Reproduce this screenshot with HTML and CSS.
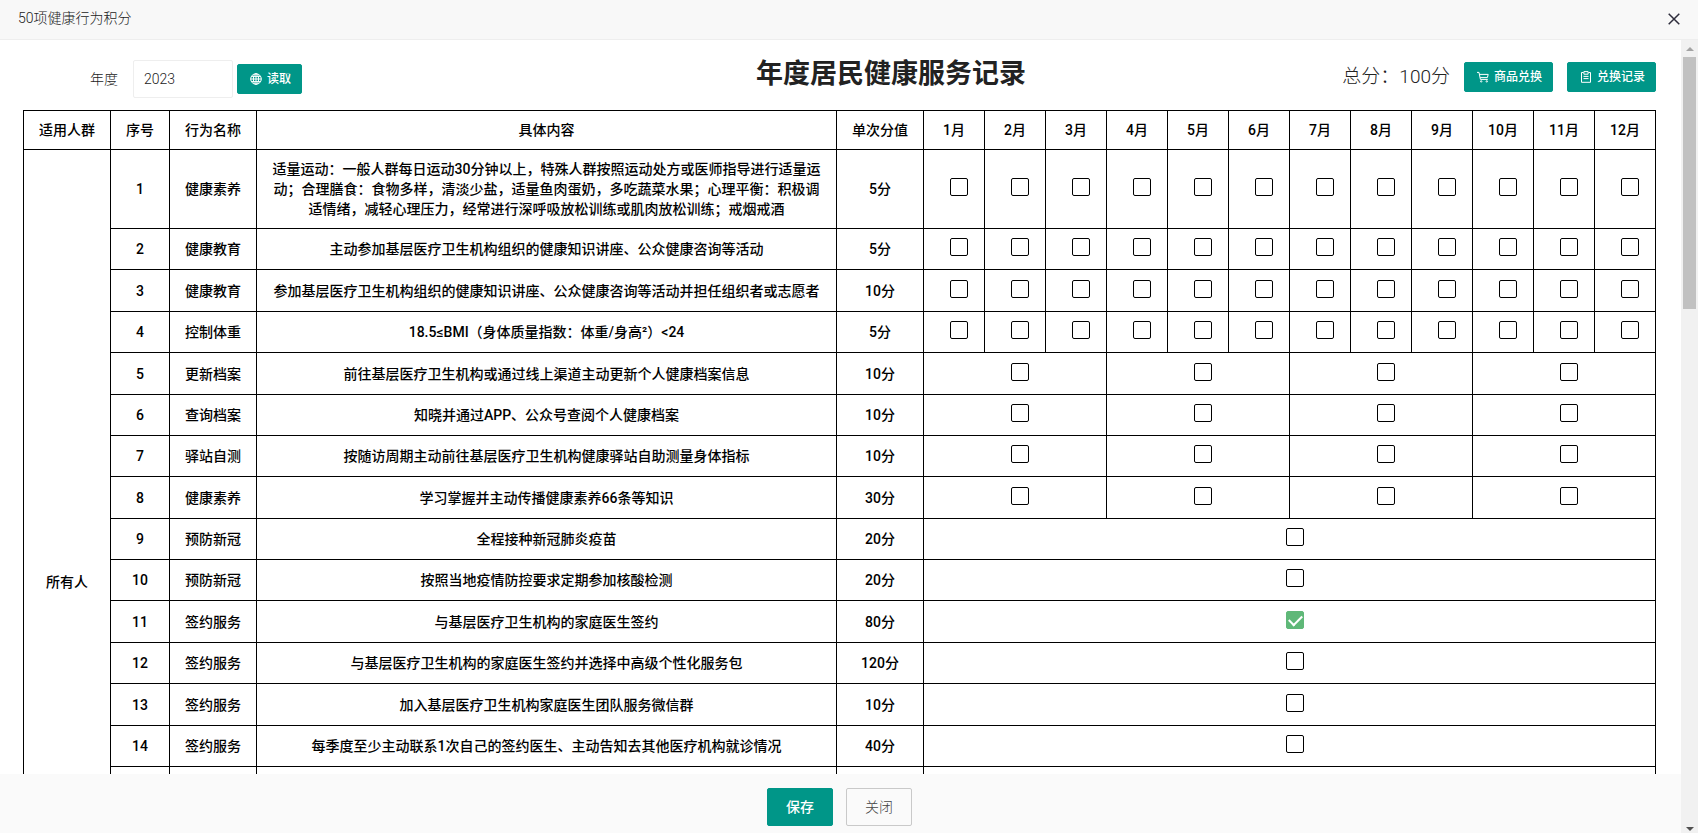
FILE: index.html
```html
<!DOCTYPE html>
<html lang="zh-CN">
<head>
<meta charset="utf-8">
<title>50项健康行为积分</title>
<link rel="stylesheet" href="styles.css">
</head>
<body>
<header class="dialog-head">
  <h1 class="dialog-title">50项健康行为积分</h1>
  <button class="dialog-close" type="button" aria-label="关闭窗口">
    <svg width="12" height="12" viewBox="0 0 12 12" fill="none" stroke="#2e2d3c" stroke-width="1.5"><path d="M.7.7l10.6 10.6M11.3.7L.7 11.3"/></svg>
  </button>
</header>
<div class="dialog-body">
  <div class="panel">
    <main class="content">
      <div class="toolbar">
        <form class="year-form">
          <label class="year-label" for="year">年度</label>
          <input class="year-input" id="year" type="text" value="2023">
          <button class="btn btn-small" type="button">
            <svg class="btn-icon" viewBox="0 0 12 12" fill="none" stroke="currentColor" stroke-width="1"><circle cx="6" cy="6" r="5.3"/><ellipse cx="6" cy="6" rx="2.6" ry="5.3"/><path d="M6 .7v10.6M.7 6h10.6M1.5 3.4h9M1.5 8.6h9"/></svg>
            读取
          </button>
        </form>
        <h2 class="record-title">年度居民健康服务记录</h2>
        <div class="score-bar">
          <span class="score">总分：100分</span>
          <button class="btn btn-small" type="button">
            <svg class="btn-icon" viewBox="0 0 12 12" fill="none" stroke="currentColor" stroke-width="1"><path d="M0 1.4h2l1.4 7h7.4M2.4 3.4h8.8l-.8 3.2H3.2"/><circle cx="4.2" cy="10.4" r=".7"/><circle cx="9.8" cy="10.4" r=".7"/></svg>
            商品兑换
          </button>
          <button class="btn btn-small" type="button">
            <svg class="btn-icon" viewBox="0 0 12 12" fill="none" stroke="currentColor" stroke-width="1"><path d="M3.5 1.5h-2v9.8h9V1.5h-2M3.9.6h4.2v2.6H3.9zM3.5 5.4h5M3.5 7.6h5"/></svg>
            兑换记录
          </button>
        </div>
      </div>
      <table class="records">
        <colgroup>
          <col class="col-label"><col class="col-index"><col class="col-label"><col><col class="col-label">
          <col class="col-month" span="12">
        </colgroup>
        <thead>
          <tr class="head-row"><th>适用人群</th><th>序号</th><th>行为名称</th><th>具体内容</th><th>单次分值</th><th>1月</th><th>2月</th><th>3月</th><th>4月</th><th>5月</th><th>6月</th><th>7月</th><th>8月</th><th>9月</th><th>10月</th><th>11月</th><th>12月</th></tr>
        </thead>
        <tbody>
          <tr class="long"><td rowspan="15">所有人</td><td>1</td><td>健康素养</td><td>适量运动：一般人群每日运动30分钟以上，特殊人群按照运动处方或医师指导进行适量运动；合理膳食：食物多样，清淡少盐，适量鱼肉蛋奶，多吃蔬菜水果；心理平衡：积极调适情绪，减轻心理压力，经常进行深呼吸放松训练或肌肉放松训练；戒烟戒酒</td><td>5分</td>
            <td><input type="checkbox" aria-label="1月"></td><td><input type="checkbox" aria-label="2月"></td><td><input type="checkbox" aria-label="3月"></td><td><input type="checkbox" aria-label="4月"></td><td><input type="checkbox" aria-label="5月"></td><td><input type="checkbox" aria-label="6月"></td><td><input type="checkbox" aria-label="7月"></td><td><input type="checkbox" aria-label="8月"></td><td><input type="checkbox" aria-label="9月"></td><td><input type="checkbox" aria-label="10月"></td><td><input type="checkbox" aria-label="11月"></td><td><input type="checkbox" aria-label="12月"></td></tr>
          <tr><td>2</td><td>健康教育</td><td>主动参加基层医疗卫生机构组织的健康知识讲座、公众健康咨询等活动</td><td>5分</td>
            <td><input type="checkbox" aria-label="1月"></td><td><input type="checkbox" aria-label="2月"></td><td><input type="checkbox" aria-label="3月"></td><td><input type="checkbox" aria-label="4月"></td><td><input type="checkbox" aria-label="5月"></td><td><input type="checkbox" aria-label="6月"></td><td><input type="checkbox" aria-label="7月"></td><td><input type="checkbox" aria-label="8月"></td><td><input type="checkbox" aria-label="9月"></td><td><input type="checkbox" aria-label="10月"></td><td><input type="checkbox" aria-label="11月"></td><td><input type="checkbox" aria-label="12月"></td></tr>
          <tr class="tall"><td>3</td><td>健康教育</td><td>参加基层医疗卫生机构组织的健康知识讲座、公众健康咨询等活动并担任组织者或志愿者</td><td>10分</td>
            <td><input type="checkbox" aria-label="1月"></td><td><input type="checkbox" aria-label="2月"></td><td><input type="checkbox" aria-label="3月"></td><td><input type="checkbox" aria-label="4月"></td><td><input type="checkbox" aria-label="5月"></td><td><input type="checkbox" aria-label="6月"></td><td><input type="checkbox" aria-label="7月"></td><td><input type="checkbox" aria-label="8月"></td><td><input type="checkbox" aria-label="9月"></td><td><input type="checkbox" aria-label="10月"></td><td><input type="checkbox" aria-label="11月"></td><td><input type="checkbox" aria-label="12月"></td></tr>
          <tr><td>4</td><td>控制体重</td><td>18.5≤BMI（身体质量指数：体重/身高²）&lt;24</td><td>5分</td>
            <td><input type="checkbox" aria-label="1月"></td><td><input type="checkbox" aria-label="2月"></td><td><input type="checkbox" aria-label="3月"></td><td><input type="checkbox" aria-label="4月"></td><td><input type="checkbox" aria-label="5月"></td><td><input type="checkbox" aria-label="6月"></td><td><input type="checkbox" aria-label="7月"></td><td><input type="checkbox" aria-label="8月"></td><td><input type="checkbox" aria-label="9月"></td><td><input type="checkbox" aria-label="10月"></td><td><input type="checkbox" aria-label="11月"></td><td><input type="checkbox" aria-label="12月"></td></tr>
          <tr class="tall"><td>5</td><td>更新档案</td><td>前往基层医疗卫生机构或通过线上渠道主动更新个人健康档案信息</td><td>10分</td>
            <td colspan="3"><input type="checkbox" aria-label="第一季度"></td><td colspan="3"><input type="checkbox" aria-label="第二季度"></td><td colspan="3"><input type="checkbox" aria-label="第三季度"></td><td colspan="3"><input type="checkbox" aria-label="第四季度"></td></tr>
          <tr><td>6</td><td>查询档案</td><td>知晓并通过APP、公众号查阅个人健康档案</td><td>10分</td>
            <td colspan="3"><input type="checkbox" aria-label="第一季度"></td><td colspan="3"><input type="checkbox" aria-label="第二季度"></td><td colspan="3"><input type="checkbox" aria-label="第三季度"></td><td colspan="3"><input type="checkbox" aria-label="第四季度"></td></tr>
          <tr><td>7</td><td>驿站自测</td><td>按随访周期主动前往基层医疗卫生机构健康驿站自助测量身体指标</td><td>10分</td>
            <td colspan="3"><input type="checkbox" aria-label="第一季度"></td><td colspan="3"><input type="checkbox" aria-label="第二季度"></td><td colspan="3"><input type="checkbox" aria-label="第三季度"></td><td colspan="3"><input type="checkbox" aria-label="第四季度"></td></tr>
          <tr class="tall"><td>8</td><td>健康素养</td><td>学习掌握并主动传播健康素养66条等知识</td><td>30分</td>
            <td colspan="3"><input type="checkbox" aria-label="第一季度"></td><td colspan="3"><input type="checkbox" aria-label="第二季度"></td><td colspan="3"><input type="checkbox" aria-label="第三季度"></td><td colspan="3"><input type="checkbox" aria-label="第四季度"></td></tr>
          <tr><td>9</td><td>预防新冠</td><td>全程接种新冠肺炎疫苗</td><td>20分</td><td colspan="12"><input type="checkbox" aria-label="全年"></td></tr>
          <tr><td>10</td><td>预防新冠</td><td>按照当地疫情防控要求定期参加核酸检测</td><td>20分</td><td colspan="12"><input type="checkbox" aria-label="全年"></td></tr>
          <tr class="tall"><td>11</td><td>签约服务</td><td>与基层医疗卫生机构的家庭医生签约</td><td>80分</td><td colspan="12"><input type="checkbox" aria-label="全年" checked></td></tr>
          <tr><td>12</td><td>签约服务</td><td>与基层医疗卫生机构的家庭医生签约并选择中高级个性化服务包</td><td>120分</td><td colspan="12"><input type="checkbox" aria-label="全年"></td></tr>
          <tr class="tall"><td>13</td><td>签约服务</td><td>加入基层医疗卫生机构家庭医生团队服务微信群</td><td>10分</td><td colspan="12"><input type="checkbox" aria-label="全年"></td></tr>
          <tr><td>14</td><td>签约服务</td><td>每季度至少主动联系1次自己的签约医生、主动告知去其他医疗机构就诊情况</td><td>40分</td><td colspan="12"><input type="checkbox" aria-label="全年"></td></tr>
          <tr class="rest"><td></td><td></td><td></td><td></td><td colspan="12"></td></tr>
        </tbody>
      </table>
    </main>
    <footer class="actions">
      <button class="btn" type="button">保存</button>
      <button class="btn btn-plain" type="button">关闭</button>
    </footer>
  </div>
  <div class="scrollbar" aria-hidden="true">
    <svg class="arrow arrow-up" viewBox="0 0 8 4"><path d="M0 4l4-4 4 4z"/></svg>
    <div class="thumb"></div>
    <svg class="arrow arrow-down" viewBox="0 0 8 4"><path d="M0 0l4 4 4-4z"/></svg>
  </div>
</div>
</body>
</html>
```
FILE: styles.css
```css
* { box-sizing: border-box; }

body {
  margin: 0;
  height: 100vh;
  display: flex;
  flex-direction: column;
  overflow: hidden;
  background: #fff;
  color: #222;
  font: 300 14px/20px Roboto, "Noto Sans CJK SC", sans-serif;
}

button, input { font: inherit; }

/* Dialog header */
.dialog-head {
  flex: none;
  height: 40px;
  padding: 0 18px 2px;
  display: flex;
  align-items: center;
  justify-content: space-between;
  background: #f8f8f8;
  border-bottom: 1px solid #eee;
}
.dialog-title { margin: 0; padding-bottom: 2px; font-size: 14px; font-weight: 300; }
.dialog-close { display: flex; padding: 0; border: 0; background: none; cursor: pointer; }

.dialog-body { flex: 1; min-height: 0; display: flex; }
.panel { flex: 1; min-width: 0; display: flex; flex-direction: column; }
.content { flex: 1; min-height: 0; overflow: hidden; padding: 0 25px 0 23px; }

/* Toolbar */
.toolbar {
  display: grid;
  grid-template-columns: 445px 1fr 342px;
  align-items: start;
  padding: 20px 0 12px;
}
.year-form { display: flex; align-items: center; padding-left: 67px; }
.year-label { margin-right: 15px; }
.year-input {
  width: 100px;
  height: 38px;
  margin-right: 4px;
  padding: 0 10px;
  border: 1px solid #eee;
  border-radius: 2px;
  background: #fff;
  color: #222;
}
.record-title {
  margin: 0;
  text-align: center;
  font-size: 27px;
  line-height: 28px;
  font-weight: 700;
}
.score-bar { display: flex; align-items: center; justify-content: flex-end; gap: 14px; height: 34px; }
.score { font-size: 19px; white-space: nowrap; }

/* Buttons */
.btn {
  display: inline-flex;
  align-items: center;
  justify-content: center;
  height: 38px;
  padding: 0 18px;
  border: 1px solid #009688;
  border-radius: 2px;
  background: #009688;
  color: #fff;
  font-weight: 500;
  white-space: nowrap;
  cursor: pointer;
}
.btn-small { height: 30px; padding: 0 10px 0 12px; gap: 5px; font-size: 12px; }
.btn-icon { width: 12px; height: 12px; }
.btn-plain { border-color: #c9c9c9; background: none; color: #444; font-weight: 300; }

/* Records table */
.records {
  width: 100%;
  table-layout: fixed;
  border-collapse: collapse;
  color: #000;
  text-align: center;
}
.records th, .records td { border: 1px solid #000; padding: 0 15px; font-weight: 500; }
.records th { padding: 0; }
.col-label { width: 87px; }
.col-index { width: 59px; }
.col-month { width: 61px; }
.records tr { height: 41px; }
.records .head-row { height: 39px; }
.records .tall { height: 42px; }
.records .long { height: 79px; }
.records .rest { height: 247px; }

.records input {
  appearance: none;
  display: inline-block;
  vertical-align: middle;
  width: 18px;
  height: 18px;
  margin: 0 0 4px 10px;
  border: 1px solid #000;
  border-radius: 2px;
  background: #fff;
}
.records input:checked { border-color: #5fb878; background: #5fb878; }
.records input:checked::before {
  content: "";
  display: block;
  width: 11px;
  height: 6px;
  margin: 3px 0 0 2px;
  border: solid #fff;
  border-width: 0 0 2px 2px;
  transform: rotate(-45deg);
}

/* Footer */
.actions {
  flex: none;
  height: 59px;
  display: flex;
  justify-content: center;
  align-items: center;
  gap: 13px;
  padding: 7px 2px 0 0;
  background: #fafafa;
}

/* Scrollbar */
.scrollbar {
  flex: none;
  width: 17px;
  display: flex;
  flex-direction: column;
  align-items: center;
  background: #f1f1f1;
}
.arrow { width: 8px; height: 4px; }
.arrow-up { margin: 7px 0 6px; fill: #a3a3a3; }
.arrow-down { margin: auto 0 2px; fill: #505050; }
.thumb { width: 13px; height: 252px; background: #c1c1c1; }
```
